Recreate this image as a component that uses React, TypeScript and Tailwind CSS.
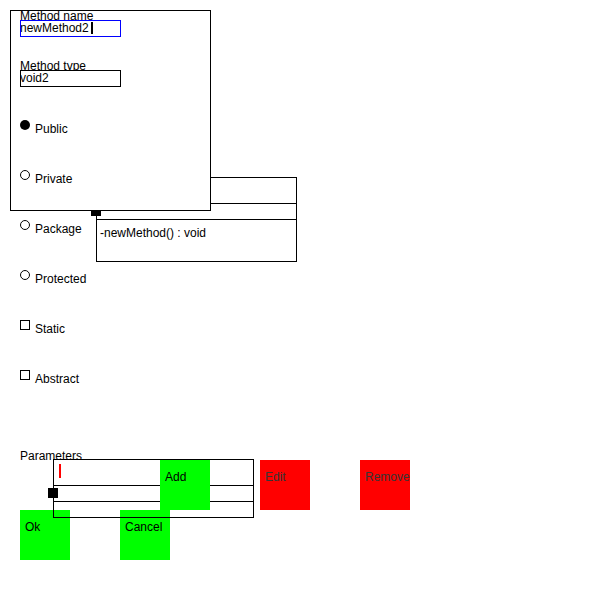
import React from "react";

function Radio({ checked, label }: { checked?: boolean; label: string }) {
  return (
    <div className="h-[50px] pt-[20px] flex items-start">
      <div
        className={
          checked
            ? "w-[10px] h-[10px] rounded-full bg-black"
            : "w-[10px] h-[10px] rounded-full border border-black bg-white"
        }
      />
      <div className="ml-[5px] mt-[2px] leading-[14px] text-black">{label}</div>
    </div>
  );
}

function Check({ label }: { label: string }) {
  return (
    <div className="h-[50px] pt-[20px] flex items-start">
      <div className="w-[10px] h-[10px] border border-black bg-white" />
      <div className="ml-[5px] mt-[2px] leading-[14px] text-black">{label}</div>
    </div>
  );
}

function Field({
  label,
  value,
  focused,
}: {
  label: string;
  value: string;
  focused?: boolean;
}) {
  return (
    <div className="h-[50px] pt-[11px] flex flex-col items-start">
      <div className="h-[9px] leading-[11px] whitespace-nowrap text-black">{label}</div>
      <div
        className={
          "relative w-[101px] h-[17px] border bg-white overflow-hidden " +
          (focused ? "border-[#0000ff]" : "border-black")
        }
      >
        <div className="-ml-[1px] leading-[15px] whitespace-nowrap text-black">{value}</div>
        {focused && (
          <div className="absolute left-[70px] top-[1px] w-[2px] h-[12px] bg-black" />
        )}
      </div>
    </div>
  );
}

function Btn({
  label,
  green,
  className = "",
}: {
  label: string;
  green?: boolean;
  className?: string;
}) {
  return (
    <div
      className={
        "w-[50px] h-[50px] pl-[5px] pt-[10px] leading-[14px] overflow-hidden whitespace-nowrap " +
        (green ? "bg-[#00ff00] text-black " : "bg-[#ff0000] text-[#363636] ") +
        className
      }
    >
      {label}
    </div>
  );
}

export default function App() {
  return (
    <div className="relative w-[600px] h-[600px] bg-white overflow-hidden font-['Liberation_Sans',Arial,sans-serif] text-[12px] text-black">
      {/* UML class box behind the dialog */}
      <div className="absolute left-[96px] top-[177px] w-[201px] border border-black bg-white flex flex-col">
        <div className="h-[25px]" />
        <div className="h-[16px] border-t border-black" />
        <div className="h-[42px] border-t border-black pl-[3px] pt-[6px] leading-[14px] whitespace-nowrap">
          -newMethod() : void
        </div>
        <div className="absolute left-[-6px] top-[28px] w-[10px] h-[10px] bg-black" />
      </div>

      {/* Dialog frame */}
      <div className="absolute left-[10px] top-[10px] w-[201px] h-[201px] border border-black bg-white" />

      {/* Form content */}
      <div className="relative pl-[20px] flex flex-col">
        <Field label="Method name" value="newMethod2" focused />
        <Field label="Method type" value="void2" />
        <Radio checked label="Public" />
        <Radio label="Private" />
        <Radio label="Package" />
        <Radio label="Protected" />
        <Check label="Static" />
        <Check label="Abstract" />
        <div className="h-[50px]" />
        <div className="h-[10px] leading-[12px] whitespace-nowrap">Parameters</div>
        <div className="flex h-[50px] pl-[140px]">
          <Btn label="Add" green className="relative z-[2]" />
          <Btn label="Edit" className="ml-[50px]" />
          <Btn label="Remove" className="ml-[50px]" />
        </div>
        <div className="flex h-[50px]">
          <Btn label="Ok" green />
          <Btn label="Cancel" green className="ml-[50px]" />
        </div>

        {/* Parameters table */}
        <div className="absolute left-[53px] top-[459px] w-[201px] border border-black flex flex-col z-[1]">
          <div className="relative h-[25px]">
            <div className="absolute left-[5px] top-[4px] w-[2px] h-[14px] bg-[#ff0000]" />
          </div>
          <div className="h-[16px] border-t border-black" />
          <div className="h-[16px] border-t border-black" />
          <div className="absolute left-[-6px] top-[28px] w-[10px] h-[10px] bg-black" />
        </div>
      </div>
    </div>
  );
}
